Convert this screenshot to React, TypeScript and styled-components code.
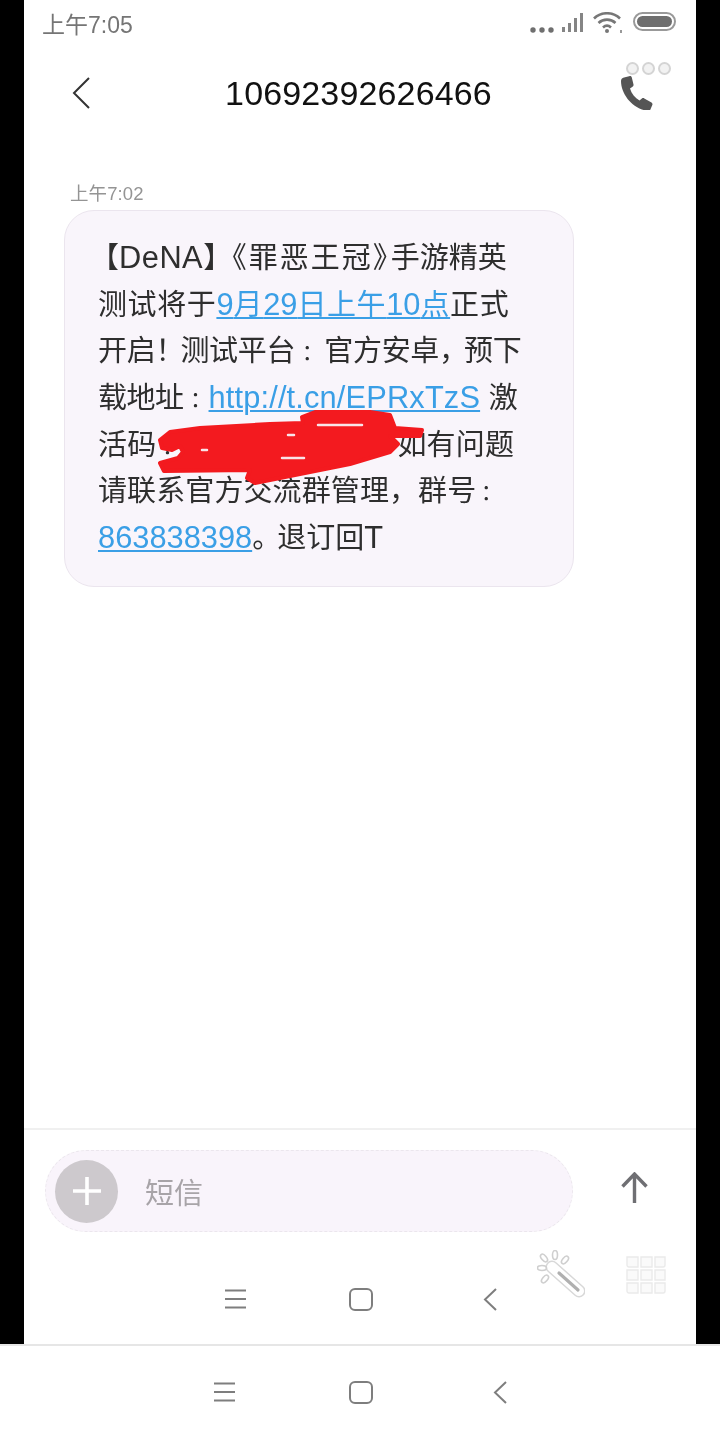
import React from "react";
import styled, { createGlobalStyle } from "styled-components";

const Global = createGlobalStyle`
  html, body { margin: 0; padding: 0; background: #fff; }
  * { box-sizing: border-box; }
`;

const Shell = styled.div`
  width: 720px;
  height: 1440px;
  display: flex;
  flex-direction: column;
  background: #fff;
  font-family: "Liberation Sans", "Noto Sans CJK SC", sans-serif;
  overflow: hidden;
`;
const Stage = styled.div`
  height: 1344px;
  background: #000;
  padding: 0 24px;
  flex: none;
`;
const Phone = styled.div`
  height: 100%;
  background: #fff;
  display: flex;
  flex-direction: column;
  filter: blur(0.7px);
`;
const StatusBar = styled.div`
  height: 46px;
  flex: none;
  display: flex;
  align-items: center;
  justify-content: space-between;
  padding: 0 20px 0 18px;
`;
const Clock = styled.span`
  font-size: 23px;
  color: #757575;
`;
const StatusIcons = styled.div`
  display: flex;
  align-items: flex-start;
  height: 46px;
  padding-top: 12px;
`;
const Glyph = styled.svg<{ $w: number; $h: number }>`
  display: block;
  flex: none;
  width: ${(p) => p.$w}px;
  height: ${(p) => p.$h}px;
`;
const Header = styled.header`
  height: 94px;
  flex: none;
  position: relative;
  display: flex;
  align-items: center;
  padding: 0 43px 0 48px;
`;
const Title = styled.h1`
  flex: 1;
  margin: 0 0 0 6px;
  text-align: center;
  font-weight: 400;
  font-size: 34px;
  letter-spacing: 0.15px;
  color: #111;
`;
const MoreDots = styled.div`
  position: absolute;
  right: 25px;
  top: 16px;
  display: flex;
  gap: 3px;
`;
const MoreDot = styled.span`
  width: 13px;
  height: 13px;
  border-radius: 50%;
  border: 2px solid #d4d4d4;
  background: #f2f2f2;
`;
const Thread = styled.main`
  flex: 1;
  padding: 42px 0 0 40px;
`;
const Stamp = styled.div`
  font-size: 18.5px;
  line-height: 24px;
  height: 24px;
  margin: 0 0 4px 6px;
  color: #949494;
  letter-spacing: 0.1px;
`;
const Bubble = styled.div`
  position: relative;
  width: 510px;
  height: 377px;
  padding: 24px 33px 0;
  background: #f9f5fb;
  border: 1px solid #ebe5ee;
  border-radius: 30px;
  color: #2e2e2e;
  font-size: 29px;
  line-height: 46.7px;
`;
const Line = styled.div<{ $track?: number }>`
  height: 46.7px;
  white-space: nowrap;
  letter-spacing: ${(p) => p.$track ?? 0}px;
`;
const Link = styled.span`
  color: #3a9fe6;
  text-decoration: underline;
  text-decoration-thickness: 2px;
  text-underline-offset: 2px;
`;
const Latin = styled.span<{ $track?: number }>`
  font-size: 30.8px;
  line-height: 0;
  letter-spacing: ${(p) => p.$track ?? 0}px;
`;
const Run = styled.span<{ $track: number }>`
  letter-spacing: ${(p) => p.$track}px;
`;
const OpenBracket = styled.span`
  margin-left: -8px;
`;
const Colon = styled.span<{ $shift: number; $track: number }>`
  font-family: "Noto Sans CJK TC", sans-serif;
  font-size: 22px;
  line-height: 0;
  margin-left: ${(p) => p.$shift}px;
  letter-spacing: ${(p) => p.$track}px;
`;
const RedactedGap = styled.span`
  display: inline-block;
  width: 212px;
`;
const Scribble = styled.svg`
  position: absolute;
  left: 85px;
  top: 189px;
  width: 290px;
  height: 90px;
`;
const Composer = styled.div`
  height: 122px;
  flex: none;
  border-top: 2px solid #f0f0f0;
  padding: 20px 0 0 21px;
  display: flex;
  align-items: flex-start;
  gap: 48px;
`;
const Pill = styled.div`
  width: 528px;
  height: 82px;
  border-radius: 41px;
  background: #f9f4fb;
  border: 1px dashed #ebe6ed;
  display: flex;
  align-items: center;
  gap: 27px;
  padding-left: 9px;
`;
const AddButton = styled.div`
  width: 63px;
  height: 63px;
  flex: none;
  border-radius: 50%;
  background: #cdc9cd;
  display: flex;
  align-items: center;
  justify-content: center;
`;
const Placeholder = styled.span`
  font-size: 29px;
  color: #a8a4a8;
`;
const SendSlot = styled.div`
  padding-top: 22px;
`;
const GhostNav = styled.div`
  height: 94px;
  flex: none;
  display: flex;
  align-items: flex-start;
`;
const NavSlot = styled.div<{ $left: number; $top: number }>`
  flex: none;
  margin: ${(p) => p.$top}px 0 0 ${(p) => p.$left}px;
`;
const SystemNav = styled.nav`
  height: 96px;
  flex: none;
  border-top: 2px solid #e6e6e6;
  background: #fff;
  display: flex;
  align-items: flex-start;
  filter: blur(0.5px);
`;

const Menu = () => (
  <Glyph $w={23} $h={20} viewBox="0 0 23 20" fill="none" stroke="#7e7e7e" strokeWidth="2">
    <path d="M1 1.500h21M1 10h21M1 18.500h21" />
  </Glyph>
);
const Home = () => (
  <Glyph $w={24} $h={23} viewBox="0 0 24 23" fill="none" stroke="#7e7e7e" strokeWidth="2">
    <rect x="1" y="1" width="22" height="21" rx="5" />
  </Glyph>
);
const Chevron = () => (
  <Glyph $w={14} $h={23} viewBox="0 0 14 23" fill="none" stroke="#7e7e7e" strokeWidth="2">
    <path d="M13 1 2 11.500 13 22" />
  </Glyph>
);

export default function App() {
  return (
    <Shell>
      <Global />
      <Stage>
        <Phone>
          <StatusBar>
            <Clock>上午7:05</Clock>
            <StatusIcons>
              <Glyph $w={32} $h={22} viewBox="0 0 32 22" fill="#6f6f6f">
                <circle cx="3" cy="18" r="2.700" />
                <circle cx="12" cy="18" r="2.700" />
                <circle cx="21" cy="18" r="2.700" />
              </Glyph>
              <Glyph $w={31} $h={22} viewBox="0 0 31 22" fill="#858585">
                <rect x="0" y="15" width="3" height="5" />
                <rect x="6" y="11" width="3" height="9" />
                <rect x="12" y="6" width="3" height="14" />
                <rect x="18" y="1" width="3" height="19" />
              </Glyph>
              <Glyph $w={40} $h={22} viewBox="0 0 40 22" fill="none" stroke="#777" strokeWidth="2.600">
                <path d="M1 6.500C8-.5 20-.5 27 6.500" />
                <path d="M5.500 11c4.700-4.500 12.300-4.500 17 0" />
                <path d="M10 15.500c2.500-2.300 5.500-2.300 8 0" />
                <circle cx="14" cy="19" r="2" fill="#777" stroke="none" />
                <path d="M28 18v3" strokeWidth="1.500" />
              </Glyph>
              <Glyph $w={43} $h={19} viewBox="0 0 43 19" fill="none">
                <rect x="1" y="1" width="41" height="17" rx="8.500" stroke="#999" strokeWidth="2" />
                <rect x="4" y="4" width="35" height="11" rx="5.500" fill="#6e6e6e" />
              </Glyph>
            </StatusIcons>
          </StatusBar>
          <Header>
            <Glyph $w={18} $h={32} viewBox="0 0 18 32" fill="none" stroke="#333" strokeWidth="2">
              <path d="M17 1 2 16l15 15" />
            </Glyph>
            <Title>10692392626466</Title>
            <Glyph $w={32} $h={34} viewBox="0 0 32 34" fill="#555">
              <path d="M3 1.500 9 0c1 0 1.500.5 1.800 1.500l1.700 7c.2 1-.2 1.700-1 2.200L9 12.500c1.500 5 5 9.500 9.500 12l2.400-2c.8-.6 1.600-.6 2.400-.1l7.200 4.200c.8.5 1.200 1.300.9 2.200l-2 4.700c-.3.800-1 1.300-2 1.300C13 34 0 19 0 5c0-2 1-3 3-3.500z" />
            </Glyph>
            <MoreDots>
              <MoreDot />
              <MoreDot />
              <MoreDot />
            </MoreDots>
          </Header>
          <Thread>
            <Stamp>上午7:02</Stamp>
            <Bubble>
              <Line>
                <OpenBracket>【</OpenBracket>
                <Latin $track={0.5}>DeNA</Latin>
                <Run $track={0}>】</Run>
                <Run $track={2}>《罪恶王冠</Run>
                <Run $track={-11}>》</Run>手游精英
              </Line>
              <Line $track={0.6}>
                测试将于
                <Link>
                  <Latin>9</Latin>月<Latin>29</Latin>日上午<Latin>10</Latin>点
                </Link>
                正式
              </Line>
              <Line $track={-0.3}>
                开启<Run $track={-4}>！</Run>测试平台<Colon $shift={1} $track={6}>：</Colon>官方安卓<Run $track={-4}>，</Run>预下
              </Line>
              <Line $track={-0.5}>
                载地址<Colon $shift={1} $track={2}>：</Colon>
                <Link>
                  <Latin $track={0.15}>http://t.cn/EPRxTzS</Latin>
                </Link>
                <Latin> </Latin>激
              </Line>
              <Line $track={0.2}>
                活码<Colon $shift={0} $track={7}>：</Colon>
                <RedactedGap />
                如有问题
              </Line>
              <Line $track={0.1}>
                请联系官方交流群管理，群号<Colon $shift={-1} $track={0}>：</Colon>
              </Line>
              <Line>
                <Link>
                  <Latin>863838398</Latin>
                </Link>
                <Run $track={-4}>。</Run>退订回<Latin>T</Latin>
              </Line>
              <Scribble viewBox="0 0 290 90">
                <path
                  fill="#f31a1f"
                  stroke="#f31a1f"
                  strokeWidth="4"
                  strokeLinejoin="round"
                  d="M10 40 20 32 50 28 120 24 153 23 152 17 165 12 220 12 240 15 245 28 272 30 270 36 240 36 248 44 240 52 200 64 105 83 97 78 100 70 14 71 10 63 28 58 33 52 30 46 22 50 12 48Z"
                />
                <path
                  stroke="#f9e4e8"
                  strokeWidth="2.500"
                  strokeLinecap="round"
                  fill="none"
                  d="M168 25h44M138 35h6M52 50h5M132 58h22"
                />
              </Scribble>
            </Bubble>
          </Thread>
          <Composer>
            <Pill>
              <AddButton>
                <Glyph $w={28} $h={28} viewBox="0 0 28 28" stroke="#fff" strokeWidth="3.600">
                  <path d="M14 0v28M0 14h28" />
                </Glyph>
              </AddButton>
              <Placeholder>短信</Placeholder>
            </Pill>
            <SendSlot>
              <Glyph $w={27} $h={31} viewBox="0 0 27 31" fill="none" stroke="#6f6f73" strokeWidth="3.400">
                <path d="M13.500 31V3M1.500 14.500 13.500 2l12 12.500" />
              </Glyph>
            </SendSlot>
          </Composer>
          <GhostNav>
            <NavSlot $left={200} $top={39}>
              <Menu />
            </NavSlot>
            <NavSlot $left={102} $top={38}>
              <Home />
            </NavSlot>
            <NavSlot $left={110} $top={38}>
              <Chevron />
            </NavSlot>
            <NavSlot $left={40} $top={0}>
              <Glyph $w={48} $h={48} viewBox="0 0 48 48" fill="none" stroke="#cfcfcf" strokeWidth="1.600">
                <path d="M15 17 42 41" stroke="#d8d8d8" strokeWidth="13" strokeLinecap="round" />
                <path d="M15 17 42 41" stroke="#fff" strokeWidth="10" strokeLinecap="round" />
                <path d="M22 23 41 40" stroke="#b0b0b0" strokeWidth="3.200" strokeLinecap="round" />
                <ellipse cx="18" cy="5" rx="2.500" ry="4.500" />
                <ellipse cx="28" cy="10" rx="2.500" ry="4.500" transform="rotate(40 28 10)" />
                <ellipse cx="7" cy="8" rx="2.500" ry="4.500" transform="rotate(-40 7 8)" />
                <ellipse cx="5" cy="18" rx="4.500" ry="2.500" />
                <ellipse cx="8" cy="29" rx="2.500" ry="4.500" transform="rotate(40 8 29)" />
              </Glyph>
            </NavSlot>
            <NavSlot $left={41} $top={6}>
              <Glyph $w={40} $h={38} viewBox="0 0 40 38" fill="#fafafa" stroke="#eaeaea" strokeWidth="1.400">
                <path d="M1 1h11v10H3a2 2 0 0 1-2-2zM15 1h11v10H15zM29 1h10v8a2 2 0 0 1-2 2h-8zM1 14h11v10H1zM15 14h11v10H15zM29 14h10v10H29zM1 27h11v10H3a2 2 0 0 1-2-2zM15 27h11v10H15zM29 27h10v8a2 2 0 0 1-2 2h-8z" />
              </Glyph>
            </NavSlot>
          </GhostNav>
        </Phone>
      </Stage>
      <SystemNav>
        <NavSlot $left={213} $top={36}>
          <Menu />
        </NavSlot>
        <NavSlot $left={113} $top={35}>
          <Home />
        </NavSlot>
        <NavSlot $left={120} $top={35}>
          <Chevron />
        </NavSlot>
      </SystemNav>
    </Shell>
  );
}
